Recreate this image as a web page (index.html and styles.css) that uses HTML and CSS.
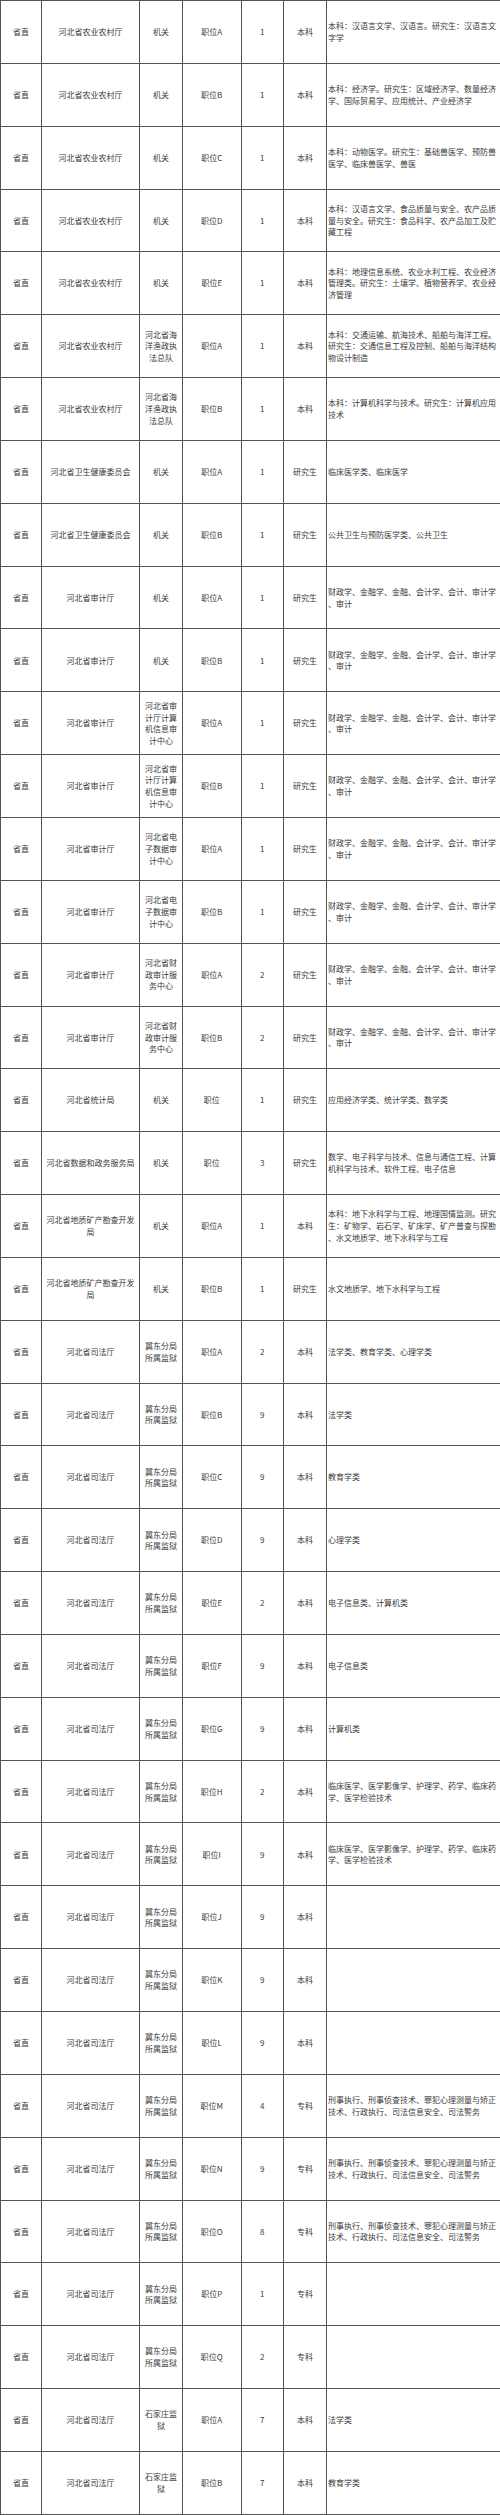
FILE: index.html
```html
<!DOCTYPE html>
<html lang="zh-CN">
<head>
<meta charset="utf-8">
<title>职位表</title>
<link rel="stylesheet" href="styles.css">
</head>
<body>
<table class="jobs">
<colgroup>
<col class="c-level"><col class="c-dept"><col class="c-unit"><col class="c-pos"><col class="c-num"><col class="c-edu"><col class="c-major">
</colgroup>
<tbody>
<tr><td>省直</td><td>河北省农业农村厅</td><td>机关</td><td>职位A</td><td>1</td><td>本科</td><td class="major">本科：汉语言文学、汉语言。研究生：汉语言文字学</td></tr>
<tr><td>省直</td><td>河北省农业农村厅</td><td>机关</td><td>职位B</td><td>1</td><td>本科</td><td class="major">本科：经济学。研究生：区域经济学、数量经济学、国际贸易学、应用统计、产业经济学</td></tr>
<tr><td>省直</td><td>河北省农业农村厅</td><td>机关</td><td>职位C</td><td>1</td><td>本科</td><td class="major">本科：动物医学。研究生：基础兽医学、预防兽医学、临床兽医学、兽医</td></tr>
<tr><td>省直</td><td>河北省农业农村厅</td><td>机关</td><td>职位D</td><td>1</td><td>本科</td><td class="major">本科：汉语言文学、食品质量与安全、农产品质量与安全。研究生：食品科学、农产品加工及贮藏工程</td></tr>
<tr><td>省直</td><td>河北省农业农村厅</td><td>机关</td><td>职位E</td><td>1</td><td>本科</td><td class="major">本科：地理信息系统、农业水利工程、农业经济管理类。研究生：土壤学、植物营养学、农业经济管理</td></tr>
<tr><td>省直</td><td>河北省农业农村厅</td><td>河北省海洋渔政执法总队</td><td>职位A</td><td>1</td><td>本科</td><td class="major">本科：交通运输、航海技术、船舶与海洋工程。研究生：交通信息工程及控制、船舶与海洋结构物设计制造</td></tr>
<tr><td>省直</td><td>河北省农业农村厅</td><td>河北省海洋渔政执法总队</td><td>职位B</td><td>1</td><td>本科</td><td class="major">本科：计算机科学与技术。研究生：计算机应用技术</td></tr>
<tr><td>省直</td><td>河北省卫生健康委员会</td><td>机关</td><td>职位A</td><td>1</td><td>研究生</td><td class="major">临床医学类、临床医学</td></tr>
<tr><td>省直</td><td>河北省卫生健康委员会</td><td>机关</td><td>职位B</td><td>1</td><td>研究生</td><td class="major">公共卫生与预防医学类、公共卫生</td></tr>
<tr><td>省直</td><td>河北省审计厅</td><td>机关</td><td>职位A</td><td>1</td><td>研究生</td><td class="major">财政学、金融学、金融、会计学、会计、审计学、审计</td></tr>
<tr><td>省直</td><td>河北省审计厅</td><td>机关</td><td>职位B</td><td>1</td><td>研究生</td><td class="major">财政学、金融学、金融、会计学、会计、审计学、审计</td></tr>
<tr><td>省直</td><td>河北省审计厅</td><td>河北省审计厅计算机信息审计中心</td><td>职位A</td><td>1</td><td>研究生</td><td class="major">财政学、金融学、金融、会计学、会计、审计学、审计</td></tr>
<tr><td>省直</td><td>河北省审计厅</td><td>河北省审计厅计算机信息审计中心</td><td>职位B</td><td>1</td><td>研究生</td><td class="major">财政学、金融学、金融、会计学、会计、审计学、审计</td></tr>
<tr><td>省直</td><td>河北省审计厅</td><td>河北省电子数据审计中心</td><td>职位A</td><td>1</td><td>研究生</td><td class="major">财政学、金融学、金融、会计学、会计、审计学、审计</td></tr>
<tr><td>省直</td><td>河北省审计厅</td><td>河北省电子数据审计中心</td><td>职位B</td><td>1</td><td>研究生</td><td class="major">财政学、金融学、金融、会计学、会计、审计学、审计</td></tr>
<tr><td>省直</td><td>河北省审计厅</td><td>河北省财政审计服务中心</td><td>职位A</td><td>2</td><td>研究生</td><td class="major">财政学、金融学、金融、会计学、会计、审计学、审计</td></tr>
<tr><td>省直</td><td>河北省审计厅</td><td>河北省财政审计服务中心</td><td>职位B</td><td>2</td><td>研究生</td><td class="major">财政学、金融学、金融、会计学、会计、审计学、审计</td></tr>
<tr><td>省直</td><td>河北省统计局</td><td>机关</td><td>职位</td><td>1</td><td>研究生</td><td class="major">应用经济学类、统计学类、数学类</td></tr>
<tr><td>省直</td><td>河北省数据和政务服务局</td><td>机关</td><td>职位</td><td>3</td><td>研究生</td><td class="major">数学、电子科学与技术、信息与通信工程、计算机科学与技术、软件工程、电子信息</td></tr>
<tr><td>省直</td><td>河北省地质矿产勘查开发局</td><td>机关</td><td>职位A</td><td>1</td><td>本科</td><td class="major">本科：地下水科学与工程、地理国情监测。研究生：矿物学、岩石学、矿床学、矿产普查与探勘、水文地质学、地下水科学与工程</td></tr>
<tr><td>省直</td><td>河北省地质矿产勘查开发局</td><td>机关</td><td>职位B</td><td>1</td><td>研究生</td><td class="major">水文地质学、地下水科学与工程</td></tr>
<tr><td>省直</td><td>河北省司法厅</td><td>冀东分局所属监狱</td><td>职位A</td><td>2</td><td>本科</td><td class="major">法学类、教育学类、心理学类</td></tr>
<tr><td>省直</td><td>河北省司法厅</td><td>冀东分局所属监狱</td><td>职位B</td><td>9</td><td>本科</td><td class="major">法学类</td></tr>
<tr><td>省直</td><td>河北省司法厅</td><td>冀东分局所属监狱</td><td>职位C</td><td>9</td><td>本科</td><td class="major">教育学类</td></tr>
<tr><td>省直</td><td>河北省司法厅</td><td>冀东分局所属监狱</td><td>职位D</td><td>9</td><td>本科</td><td class="major">心理学类</td></tr>
<tr><td>省直</td><td>河北省司法厅</td><td>冀东分局所属监狱</td><td>职位E</td><td>2</td><td>本科</td><td class="major">电子信息类、计算机类</td></tr>
<tr><td>省直</td><td>河北省司法厅</td><td>冀东分局所属监狱</td><td>职位F</td><td>9</td><td>本科</td><td class="major">电子信息类</td></tr>
<tr><td>省直</td><td>河北省司法厅</td><td>冀东分局所属监狱</td><td>职位G</td><td>9</td><td>本科</td><td class="major">计算机类</td></tr>
<tr><td>省直</td><td>河北省司法厅</td><td>冀东分局所属监狱</td><td>职位H</td><td>2</td><td>本科</td><td class="major">临床医学、医学影像学、护理学、药学、临床药学、医学检验技术</td></tr>
<tr><td>省直</td><td>河北省司法厅</td><td>冀东分局所属监狱</td><td>职位I</td><td>9</td><td>本科</td><td class="major">临床医学、医学影像学、护理学、药学、临床药学、医学检验技术</td></tr>
<tr><td>省直</td><td>河北省司法厅</td><td>冀东分局所属监狱</td><td>职位J</td><td>9</td><td>本科</td><td class="major"></td></tr>
<tr><td>省直</td><td>河北省司法厅</td><td>冀东分局所属监狱</td><td>职位K</td><td>9</td><td>本科</td><td class="major"></td></tr>
<tr><td>省直</td><td>河北省司法厅</td><td>冀东分局所属监狱</td><td>职位L</td><td>9</td><td>本科</td><td class="major"></td></tr>
<tr><td>省直</td><td>河北省司法厅</td><td>冀东分局所属监狱</td><td>职位M</td><td>4</td><td>专科</td><td class="major">刑事执行、刑事侦查技术、罪犯心理测量与矫正技术、行政执行、司法信息安全、司法警务</td></tr>
<tr><td>省直</td><td>河北省司法厅</td><td>冀东分局所属监狱</td><td>职位N</td><td>9</td><td>专科</td><td class="major">刑事执行、刑事侦查技术、罪犯心理测量与矫正技术、行政执行、司法信息安全、司法警务</td></tr>
<tr><td>省直</td><td>河北省司法厅</td><td>冀东分局所属监狱</td><td>职位O</td><td>8</td><td>专科</td><td class="major">刑事执行、刑事侦查技术、罪犯心理测量与矫正技术、行政执行、司法信息安全、司法警务</td></tr>
<tr><td>省直</td><td>河北省司法厅</td><td>冀东分局所属监狱</td><td>职位P</td><td>1</td><td>专科</td><td class="major"></td></tr>
<tr><td>省直</td><td>河北省司法厅</td><td>冀东分局所属监狱</td><td>职位Q</td><td>2</td><td>专科</td><td class="major"></td></tr>
<tr><td>省直</td><td>河北省司法厅</td><td>石家庄监狱</td><td>职位A</td><td>7</td><td>本科</td><td class="major">法学类</td></tr>
<tr><td>省直</td><td>河北省司法厅</td><td>石家庄监狱</td><td>职位B</td><td>7</td><td>本科</td><td class="major">教育学类</td></tr>
</tbody>
</table>
</body>
</html>
```
FILE: styles.css
```css
html, body {
  margin: 0;
  padding: 0;
  background: #ffffff;
}

.jobs {
  width: 500px;
  table-layout: fixed;
  border-collapse: collapse;
  font-family: "Noto Sans CJK SC", "Liberation Sans", sans-serif;
  font-size: 8px;
  line-height: 11.67px;
  color: #3a3a3a;
}

.c-level { width: 41px; }
.c-dept  { width: 98px; }
.c-unit  { width: 43px; }
.c-pos   { width: 58.5px; }
.c-num   { width: 42.5px; }
.c-edu   { width: 43px; }
.c-major { width: 174px; }

.jobs tr {
  height: 62.85px;
}

.jobs td {
  border: 1px solid #555555;
  padding: 0 4px;
  text-align: center;
  vertical-align: middle;
  word-break: break-all;
  line-break: anywhere;
}

.jobs td.major {
  text-align: left;
  padding: 0 2px 0 1px;
}
```
